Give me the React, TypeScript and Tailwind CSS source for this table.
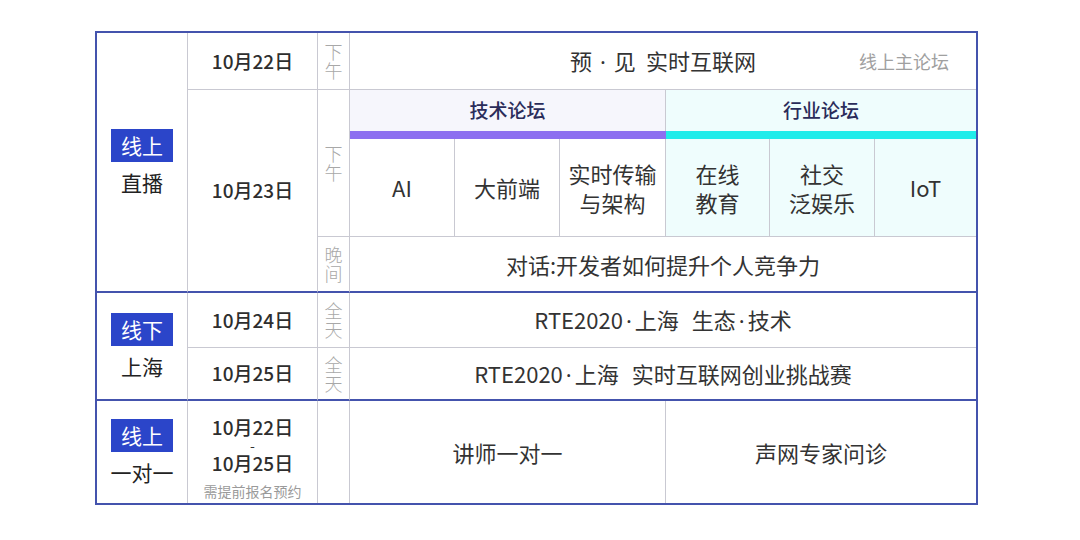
import React from "react";

const G = "border-[#c9c9d2]";
const BLUE = { borderBottomColor: "#4453ad" };

function Badge({ text, sub }: { text: string; sub: string }) {
  return (
    <div className="flex flex-col items-center">
      <div className="w-[62px] h-[33px] bg-[#2b45c9] text-white text-[21px] leading-[33px] text-center">{text}</div>
      <div className="mt-[6px] text-[21px] leading-[28px] text-[#222]">{sub}</div>
    </div>
  );
}

function Vert({ a, b }: { a: string; b: string }) {
  return (
    <div className="flex flex-col items-center text-[18px] leading-[19px] text-[#a8a8a8] font-light">
      <span>{a}</span>
      <span>{b}</span>
    </div>
  );
}

function Dot() {
  return <span className="font-['Noto_Sans',sans-serif] mx-[3px]">·</span>;
}

function Sp({ w }: { w: number }) {
  return <span className={w === 13 ? "inline-block w-[13px]" : "inline-block w-[10px]"} />;
}

export default function App() {
  const cell = "flex items-center justify-center";
  const big = "text-[22px] text-[#333]";
  const date = "text-[19px] font-medium text-[#2e2e2e]";
  return (
    <div className="w-[1080px] h-[540px] bg-white pt-[31px] pl-[95px] font-['Noto_Sans_CJK_SC',sans-serif] text-[#333]">
      <div className="w-[883px] border-2 border-[#4453ad] grid grid-cols-[91px_130px_32px_105px_105px_106px_104px_105px_101px] grid-rows-[57px_41px_8px_98px_56px_55px_53px_102px]">
        {/* Col 1 */}
        <div className={`${cell} col-start-1 row-start-1 row-span-5 border-r ${G} border-b-2`} style={BLUE}>
          <Badge text="线上" sub="直播" />
        </div>
        <div className={`${cell} col-start-1 row-start-6 row-span-2 border-r ${G} border-b-2`} style={BLUE}>
          <Badge text="线下" sub="上海" />
        </div>
        <div className={`${cell} col-start-1 row-start-8 border-r ${G}`}>
          <Badge text="线上" sub="一对一" />
        </div>

        {/* Col 2 */}
        <div className={`${cell} col-start-2 row-start-1 border-r border-b ${G} ${date}`}>10月22日</div>
        <div className={`${cell} col-start-2 row-start-2 row-span-4 border-r ${G} border-b-2 ${date}`} style={BLUE}>10月23日</div>
        <div className={`${cell} col-start-2 row-start-6 border-r border-b ${G} ${date}`}>10月24日</div>
        <div className={`${cell} col-start-2 row-start-7 border-r ${G} border-b-2 ${date}`} style={BLUE}>10月25日</div>
        <div className={`col-start-2 row-start-8 border-r ${G} flex flex-col items-center pt-[15px]`}>
          <div className={`${date} leading-[22px]`}>10月22日</div>
          <div className="text-[14px] leading-[14px] text-[#333]">-</div>
          <div className={`${date} leading-[22px]`}>10月25日</div>
          <div className="text-[14px] leading-[22px] mt-[6px] text-[#9a9a9a]">需提前报名预约</div>
        </div>

        {/* Col 3 */}
        <div className={`${cell} col-start-3 row-start-1 border-r border-b ${G}`}><Vert a="下" b="午" /></div>
        <div className={`${cell} col-start-3 row-start-2 row-span-3 border-r border-b ${G}`}><Vert a="下" b="午" /></div>
        <div className={`${cell} col-start-3 row-start-5 border-r ${G} border-b-2`} style={BLUE}><Vert a="晚" b="间" /></div>
        <div className={`${cell} col-start-3 row-start-6 border-r border-b ${G}`}><Vert a="全" b="天" /></div>
        <div className={`${cell} col-start-3 row-start-7 border-r ${G} border-b-2`} style={BLUE}><Vert a="全" b="天" /></div>
        <div className={`col-start-3 row-start-8 border-r ${G}`}></div>

        {/* Right: row 1 */}
        <div className={`relative ${cell} col-start-4 col-span-6 row-start-1 border-b ${G}`}>
          <span className={`${big} whitespace-pre`}>预 <Dot /> 见<Sp w={10} />实时互联网</span>
          <span className="absolute right-[27px] top-1/2 -translate-y-1/2 text-[18px] text-[#a0a0a0]">线上主论坛</span>
        </div>

        {/* Forum headers */}
        <div className={`${cell} col-start-4 col-span-3 row-start-2 border-r ${G} bg-[#f6f6fc] text-[19px] font-medium text-[#2a2c5a]`}>技术论坛</div>
        <div className={`${cell} col-start-7 col-span-3 row-start-2 bg-[#effdfd] text-[19px] font-medium text-[#2a2c5a]`}>行业论坛</div>
        <div className="col-start-4 col-span-3 row-start-3 bg-[#8d6ff0]"></div>
        <div className="col-start-7 col-span-3 row-start-3 bg-[#20ecea]"></div>

        {/* Tracks */}
        <div className={`${cell} col-start-4 row-start-4 border-r border-b ${G} ${big}`}>AI</div>
        <div className={`${cell} col-start-5 row-start-4 border-r border-b ${G} ${big}`}>大前端</div>
        <div className={`${cell} col-start-6 row-start-4 border-r border-b ${G} ${big} leading-[29px] text-center`}>实时传输<br />与架构</div>
        <div className={`${cell} col-start-7 row-start-4 border-r border-b ${G} bg-[#effdfd] ${big} leading-[29px] text-center`}>在线<br />教育</div>
        <div className={`${cell} col-start-8 row-start-4 border-r border-b ${G} bg-[#effdfd] ${big} leading-[29px] text-center`}>社交<br />泛娱乐</div>
        <div className={`${cell} col-start-9 row-start-4 border-b ${G} bg-[#effdfd] ${big}`}>IoT</div>

        {/* Row 5 */}
        <div className={`${cell} col-start-4 col-span-6 row-start-5 border-b-2 ${big}`} style={BLUE}>对话:开发者如何提升个人竞争力</div>
        {/* Row 6 */}
        <div className={`${cell} col-start-4 col-span-6 row-start-6 border-b ${G} ${big}`}>
          <span>RTE2020<Dot />上海<Sp w={13} />生态<Dot />技术</span>
        </div>
        {/* Row 7 */}
        <div className={`${cell} col-start-4 col-span-6 row-start-7 border-b-2 ${big}`} style={BLUE}>
          <span>RTE2020<Dot />上海<Sp w={13} />实时互联网创业挑战赛</span>
        </div>
        {/* Row 8 */}
        <div className={`${cell} col-start-4 col-span-3 row-start-8 border-r ${G} ${big}`}>讲师一对一</div>
        <div className={`${cell} col-start-7 col-span-3 row-start-8 ${big}`}>声网专家问诊</div>
      </div>
    </div>
  );
}
